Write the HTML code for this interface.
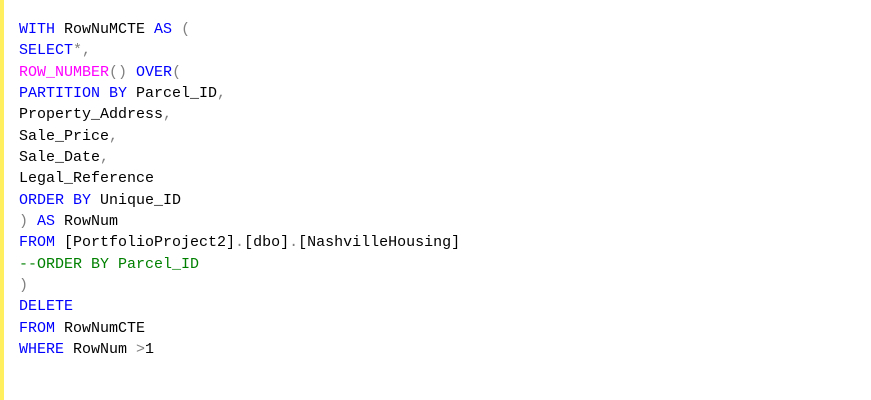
<!DOCTYPE html>
<html><head><meta charset="utf-8"><style>
html,body{margin:0;padding:0;background:#fff;width:871px;height:400px;overflow:hidden}
.bar{position:absolute;left:0;top:0;width:4px;height:400px;background:#ffef5e}
pre{position:absolute;left:19px;top:19px;margin:0;font-family:"Liberation Mono",monospace;font-size:15px;line-height:21.33px;color:#000}
.k{color:#0000ff}.g{color:#808080}.m{color:#ff00ff}.c{color:#008000}
</style></head><body><div class="bar"></div>
<pre><span class="k">WITH</span> RowNuMCTE <span class="k">AS</span> <span class="g">(</span>
<span class="k">SELECT</span><span class="g">*,</span>
<span class="m">ROW_NUMBER</span><span class="g">()</span> <span class="k">OVER</span><span class="g">(</span>
<span class="k">PARTITION BY</span> Parcel_ID<span class="g">,</span>
Property_Address<span class="g">,</span>
Sale_Price<span class="g">,</span>
Sale_Date<span class="g">,</span>
Legal_Reference
<span class="k">ORDER BY</span> Unique_ID
<span class="g">)</span> <span class="k">AS</span> RowNum
<span class="k">FROM</span> [PortfolioProject2]<span class="g">.</span>[dbo]<span class="g">.</span>[NashvilleHousing]
<span class="c">--ORDER BY Parcel_ID</span>
<span class="g">)</span>
<span class="k">DELETE</span>
<span class="k">FROM</span> RowNumCTE
<span class="k">WHERE</span> RowNum <span class="g">&gt;</span>1</pre>
</body></html>
